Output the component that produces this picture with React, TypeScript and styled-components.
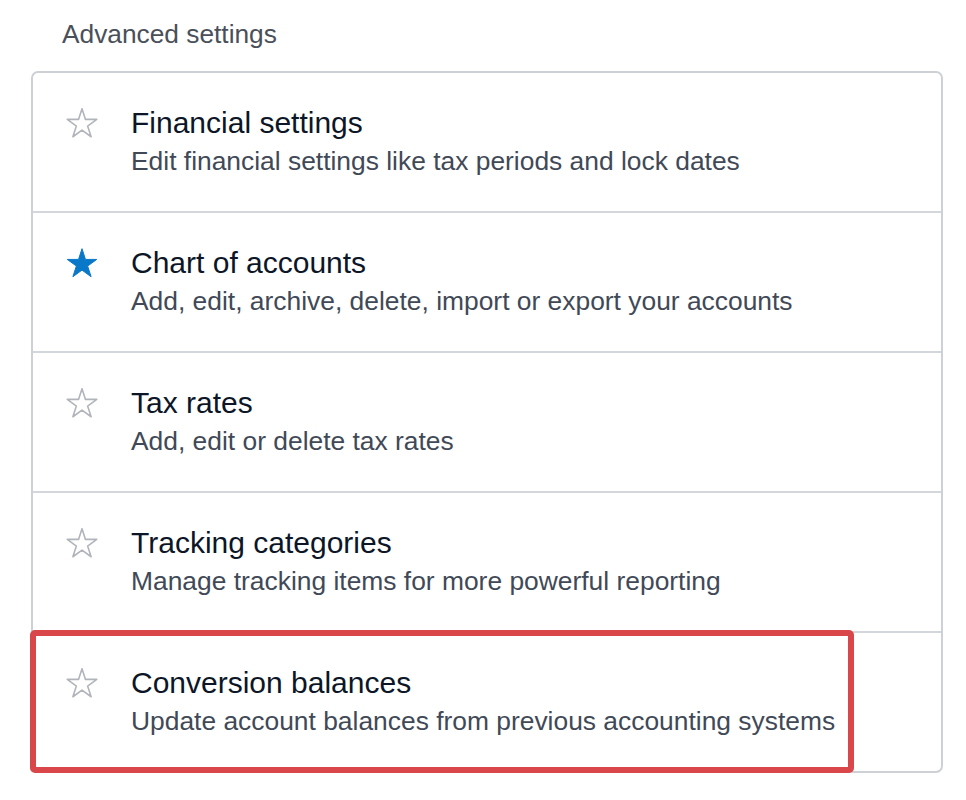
import styled, { createGlobalStyle } from "styled-components";

const GlobalStyle = createGlobalStyle`
  body {
    margin: 0;
    background: #fff;
    font-family: "Liberation Sans", Arial, sans-serif;
  }
`

const Page = styled.div`
  padding: 18px 0 0 31px;
  width: 912px;
`

const SectionTitle = styled.h2`
  margin: 0 0 21px 31px;
  font-size: 26.3px;
  line-height: 32px;
  font-weight: 400;
  color: #4a505a;
`

const Card = styled.div`
  border: 2px solid #cdd0d4;
  border-radius: 7px;
  background: #fff;
`

const Row = styled.div`
  position: relative;
  display: flex;
  align-items: flex-start;
  gap: 33px;
  height: 138px;
  box-sizing: border-box;
  padding: 32px 0 0 33px;

  & + & {
    height: 140px;
    border-top: 2px solid #d3d6da;
  }
`

const StarBox = styled.div`
  width: 32px;
  height: 30px;
  margin-top: 3px;
  flex-shrink: 0;
`

const Texts = styled.div`
  display: flex;
  flex-direction: column;
`

const Title = styled.div`
  font-size: 30px;
  line-height: 36px;
  color: #0c1627;
  margin-bottom: 4px;
`

const Description = styled.div`
  font-size: 26.4px;
  line-height: 32px;
  color: #414957;
`

const Highlight = styled.div`
  position: absolute;
  left: -3px;
  top: -3px;
  width: 824px;
  height: 143px;
  box-sizing: border-box;
  border: 6px solid #d9474a;
  border-radius: 5px;
  pointer-events: none;
`

const starPoints =
    "16,0.7 19.48,11.41 30.74,11.41 21.63,18.03 25.11,28.74 16,22.12 6.89,28.74 10.37,18.03 1.26,11.41 12.52,11.41"

const Star = ({filled}: { filled: boolean }) => (
    <StarBox>
        <svg width="32" height="30" viewBox="0 0 32 30">
            <polygon
                points={starPoints}
                fill={filled ? "#0a78c9" : "none"}
                stroke={filled ? "#0a78c9" : "#b1b5bb"}
                strokeWidth={filled ? 1 : 1.6}
                strokeLinejoin="round"
            />
        </svg>
    </StarBox>
)

const items = [
    {title: "Financial settings", text: "Edit financial settings like tax periods and lock dates", starred: false},
    {title: "Chart of accounts", text: "Add, edit, archive, delete, import or export your accounts", starred: true},
    {title: "Tax rates", text: "Add, edit or delete tax rates", starred: false},
    {title: "Tracking categories", text: "Manage tracking items for more powerful reporting", starred: false},
    {title: "Conversion balances", text: "Update account balances from previous accounting systems", starred: false, marked: true},
]

export default function App() {
    return (
        <>
            <GlobalStyle/>
            <Page>
                <SectionTitle>Advanced settings</SectionTitle>
                <Card>
                    {items.map((item) => (
                        <Row key={item.title}>
                            <Star filled={item.starred}/>
                            <Texts>
                                <Title>{item.title}</Title>
                                <Description>{item.text}</Description>
                            </Texts>
                            {item.marked && <Highlight/>}
                        </Row>
                    ))}
                </Card>
            </Page>
        </>
    )
}
